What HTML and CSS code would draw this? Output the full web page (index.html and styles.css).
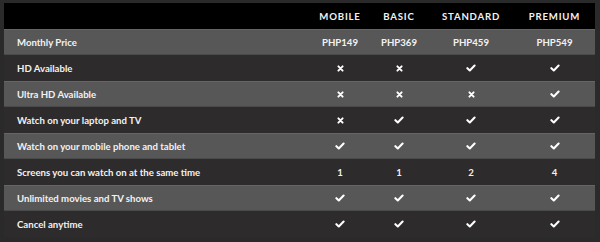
FILE: index.html
```html
<!DOCTYPE html>
<html lang="en">
<head>
  <meta charset="UTF-8" />
  <title>Plans</title>
  <link rel="stylesheet" href="styles.css">
</head>
<body>
  <div class="plans">
    <div class="row head">
      <div class="feature"></div>
      <div class="cell">MOBILE</div>
      <div class="cell">BASIC</div>
      <div class="cell">STANDARD</div>
      <div class="cell">PREMIUM</div>
    </div>

    <div class="row light">
      <div class="feature">Monthly Price</div>
      <div class="cell">PHP149</div>
      <div class="cell">PHP369</div>
      <div class="cell">PHP459</div>
      <div class="cell">PHP549</div>
    </div>

    <div class="row dark">
      <div class="feature">HD Available</div>
      <div class="cell"><svg class="no" viewBox="0 0 10 10"><path d="M2 2L8 8M8 2L2 8"/></svg></div>
      <div class="cell"><svg class="no" viewBox="0 0 10 10"><path d="M2 2L8 8M8 2L2 8"/></svg></div>
      <div class="cell"><svg class="yes" viewBox="0 0 12 10"><path d="M1.5 5.2L4.5 8L10.5 2"/></svg></div>
      <div class="cell"><svg class="yes" viewBox="0 0 12 10"><path d="M1.5 5.2L4.5 8L10.5 2"/></svg></div>
    </div>

    <div class="row light">
      <div class="feature">Ultra HD Available</div>
      <div class="cell"><svg class="no" viewBox="0 0 10 10"><path d="M2 2L8 8M8 2L2 8"/></svg></div>
      <div class="cell"><svg class="no" viewBox="0 0 10 10"><path d="M2 2L8 8M8 2L2 8"/></svg></div>
      <div class="cell"><svg class="no" viewBox="0 0 10 10"><path d="M2 2L8 8M8 2L2 8"/></svg></div>
      <div class="cell"><svg class="yes" viewBox="0 0 12 10"><path d="M1.5 5.2L4.5 8L10.5 2"/></svg></div>
    </div>

    <div class="row dark">
      <div class="feature">Watch on your laptop and TV</div>
      <div class="cell"><svg class="no" viewBox="0 0 10 10"><path d="M2 2L8 8M8 2L2 8"/></svg></div>
      <div class="cell"><svg class="yes" viewBox="0 0 12 10"><path d="M1.5 5.2L4.5 8L10.5 2"/></svg></div>
      <div class="cell"><svg class="yes" viewBox="0 0 12 10"><path d="M1.5 5.2L4.5 8L10.5 2"/></svg></div>
      <div class="cell"><svg class="yes" viewBox="0 0 12 10"><path d="M1.5 5.2L4.5 8L10.5 2"/></svg></div>
    </div>

    <div class="row light">
      <div class="feature">Watch on your mobile phone and tablet</div>
      <div class="cell"><svg class="yes" viewBox="0 0 12 10"><path d="M1.5 5.2L4.5 8L10.5 2"/></svg></div>
      <div class="cell"><svg class="yes" viewBox="0 0 12 10"><path d="M1.5 5.2L4.5 8L10.5 2"/></svg></div>
      <div class="cell"><svg class="yes" viewBox="0 0 12 10"><path d="M1.5 5.2L4.5 8L10.5 2"/></svg></div>
      <div class="cell"><svg class="yes" viewBox="0 0 12 10"><path d="M1.5 5.2L4.5 8L10.5 2"/></svg></div>
    </div>

    <div class="row dark">
      <div class="feature">Screens you can watch on at the same time</div>
      <div class="cell">1</div>
      <div class="cell">1</div>
      <div class="cell">2</div>
      <div class="cell">4</div>
    </div>

    <div class="row light">
      <div class="feature">Unlimited movies and TV shows</div>
      <div class="cell"><svg class="yes" viewBox="0 0 12 10"><path d="M1.5 5.2L4.5 8L10.5 2"/></svg></div>
      <div class="cell"><svg class="yes" viewBox="0 0 12 10"><path d="M1.5 5.2L4.5 8L10.5 2"/></svg></div>
      <div class="cell"><svg class="yes" viewBox="0 0 12 10"><path d="M1.5 5.2L4.5 8L10.5 2"/></svg></div>
      <div class="cell"><svg class="yes" viewBox="0 0 12 10"><path d="M1.5 5.2L4.5 8L10.5 2"/></svg></div>
    </div>

    <div class="row dark">
      <div class="feature">Cancel anytime</div>
      <div class="cell"><svg class="yes" viewBox="0 0 12 10"><path d="M1.5 5.2L4.5 8L10.5 2"/></svg></div>
      <div class="cell"><svg class="yes" viewBox="0 0 12 10"><path d="M1.5 5.2L4.5 8L10.5 2"/></svg></div>
      <div class="cell"><svg class="yes" viewBox="0 0 12 10"><path d="M1.5 5.2L4.5 8L10.5 2"/></svg></div>
      <div class="cell"><svg class="yes" viewBox="0 0 12 10"><path d="M1.5 5.2L4.5 8L10.5 2"/></svg></div>
    </div>
  </div>
</body>
</html>
```

FILE: styles.css
```css
body {
  margin: 0;
  background: #2b2a2b;
  font-family: 'Lato', 'Open Sans', sans-serif;
  color: #f2f2f2;
  height: 242px;
  overflow: hidden;
}

.plans {
  margin: 3px 0 0 4px;
  width: 591px;
}

.row {
  display: grid;
  grid-template-columns: 306px 60px 58px 86px 81px;
  height: 26px;
  align-items: center;
  box-sizing: border-box;
}

.row.head {
  background: #000;
}

.row.light {
  background: #585758;
  border-top: 1px solid #666566;
  border-bottom: 1px solid #4a494a;
}

.row.dark {
  background: #2d2b2c;
}

.feature {
  padding-left: 13px;
  font-size: 9.6px;
  font-weight: 700;
}

.cell {
  text-align: center;
  font-size: 9.6px;
  font-weight: 700;
  display: flex;
  justify-content: center;
  align-items: center;
}

.head .cell {
  font-size: 9.6px;
  letter-spacing: 0.8px;
  font-weight: 700;
  padding-top: 1px;
}

.cell svg {
  fill: none;
  stroke: #fff;
  stroke-linecap: round;
  stroke-linejoin: round;
}

svg.yes {
  width: 10px;
  height: 8px;
  stroke-width: 2.6;
}

svg.no {
  width: 7px;
  height: 7px;
  stroke-width: 2.8;
}
```
